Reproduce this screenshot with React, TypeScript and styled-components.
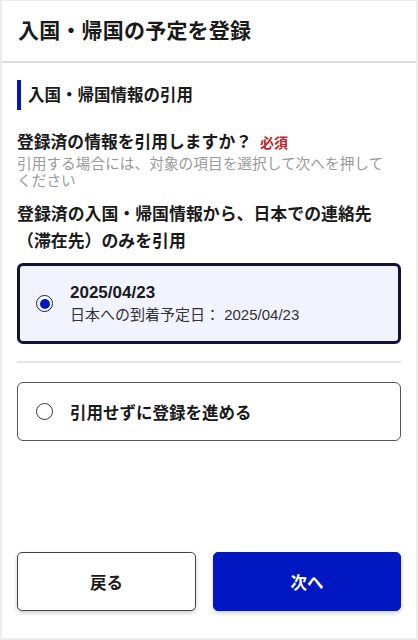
import { useState } from "react";
import styled, { createGlobalStyle } from "styled-components";

const GlobalStyle = createGlobalStyle`
  html, body {
    margin: 0;
    padding: 0;
    background: #fff;
  }
  body {
    font-family: "Liberation Sans", "Noto Sans CJK JP", sans-serif;
    color: #1a1a1a;
  }
  * {
    box-sizing: border-box;
  }
`;

type Choice = "quote" | "skip";

export default function App() {
  const [choice, setChoice] = useState<Choice>("quote");

  return (
    <>
      <GlobalStyle />
      <Screen>
        <Header>
          <Title>入国・帰国の予定を登録</Title>
        </Header>

        <Body>
          <SectionTitle>入国・帰国情報の引用</SectionTitle>

          <Question>
            登録済の情報を引用しますか？<Required>必須</Required>
          </Question>
          <Help>引用する場合には、対象の項目を選択して次へを押してください</Help>

          <GroupLabel>登録済の入国・帰国情報から、日本での連絡先（滞在先）のみを引用</GroupLabel>

          <OptionCard $selected={choice === "quote"} onClick={() => setChoice("quote")}>
            <Radio $checked={choice === "quote"} />
            <OptionText>
              <OptionDate>2025/04/23</OptionDate>
              <OptionSub>日本への到着予定日： 2025/04/23</OptionSub>
            </OptionText>
          </OptionCard>

          <Divider />

          <OptionCard $selected={choice === "skip"} $compact onClick={() => setChoice("skip")}>
            <Radio $checked={choice === "skip"} />
            <OptionLabel>引用せずに登録を進める</OptionLabel>
          </OptionCard>
        </Body>

        <Footer>
          <Button>戻る</Button>
          <Button $primary>次へ</Button>
        </Footer>
      </Screen>
    </>
  );
}

const Screen = styled.div`
  display: flex;
  flex-direction: column;
  min-height: 100vh;
  border: 2px solid #ececec;
  border-top-width: 1px;
`;

const Header = styled.header`
  display: flex;
  align-items: center;
  height: 62px;
  padding: 0 16px 4px;
  border-bottom: 2px solid #dcdcdc;
`;

const Title = styled.h1`
  margin: 0;
  font-size: 21px;
  font-weight: 700;
  letter-spacing: 0.2px;
`;

const Body = styled.main`
  flex: 1;
  display: flex;
  flex-direction: column;
  padding: 17px 15px 0;
`;

const SectionTitle = styled.h2`
  margin: 0;
  padding: 4px 0 4px 7px;
  border-left: 4px solid #0017c1;
  font-size: 16.5px;
  font-weight: 700;
  line-height: 22px;
`;

const Question = styled.p`
  margin: 22px 0 0;
  font-size: 16.8px;
  font-weight: 700;
  line-height: 22px;
`;

const Required = styled.span`
  margin-left: 8px;
  color: #c0272d;
  font-size: 14px;
  font-weight: 700;
`;

const Help = styled.p`
  margin: 2px 0 0;
  padding-right: 10px;
  color: #9a9a9a;
  font-size: 14.7px;
  line-height: 17px;
`;

const GroupLabel = styled.p`
  margin: 11px 0 0;
  padding-right: 16px;
  font-size: 16.9px;
  font-weight: 700;
  line-height: 27px;
`;

const OptionCard = styled.div<{ $selected: boolean; $compact?: boolean }>`
  display: flex;
  align-items: center;
  gap: 17px;
  margin-top: ${({ $compact }) => ($compact ? "0" : "8px")};
  min-height: ${({ $compact }) => ($compact ? "59px" : "81px")};
  padding: 0 16px;
  border: ${({ $selected }) => ($selected ? "3px solid #12123a" : "1px solid #555")};
  border-radius: 6px;
  background: ${({ $selected }) => ($selected ? "#f1f3ff" : "#fff")};
  cursor: pointer;
`;

const Radio = styled.span<{ $checked: boolean }>`
  flex: none;
  display: flex;
  align-items: center;
  justify-content: center;
  width: 17px;
  height: 17px;
  margin-left: ${({ $checked }) => ($checked ? "0" : "2px")};
  border-radius: 50%;
  border: 1.5px solid ${({ $checked }) => ($checked ? "#0a1580" : "#333")};
  background: #fff;

  &::after {
    content: "";
    display: ${({ $checked }) => ($checked ? "block" : "none")};
    width: 10px;
    height: 10px;
    border-radius: 50%;
    background: #0017c1;
  }
`;

const OptionText = styled.div`
  display: flex;
  flex-direction: column;
  gap: 2px;
`;

const OptionDate = styled.span`
  font-size: 17px;
  font-weight: 700;
  line-height: 20px;
`;

const OptionSub = styled.span`
  font-size: 15px;
  line-height: 20px;
  color: #333;
`;

const OptionLabel = styled.span`
  font-size: 16.5px;
  font-weight: 700;
`;

const Divider = styled.hr`
  margin: 17px 0 19px;
  border: none;
  border-top: 2px solid #e3e3e3;
`;

const Footer = styled.footer`
  display: grid;
  grid-template-columns: 179fr 188fr;
  gap: 17px;
  padding: 0 15px 27px;
`;

const Button = styled.button<{ $primary?: boolean }>`
  height: 59px;
  border-radius: 5px;
  border: 1px solid ${({ $primary }) => ($primary ? "#0017c1" : "#444")};
  background: ${({ $primary }) => ($primary ? "#0017c1" : "#fff")};
  color: ${({ $primary }) => ($primary ? "#fff" : "#1a1a1a")};
  box-shadow: 0 2px 4px rgba(0, 0, 0, 0.2);
  font-family: inherit;
  font-size: 16.5px;
  font-weight: 700;
  cursor: pointer;
`;
